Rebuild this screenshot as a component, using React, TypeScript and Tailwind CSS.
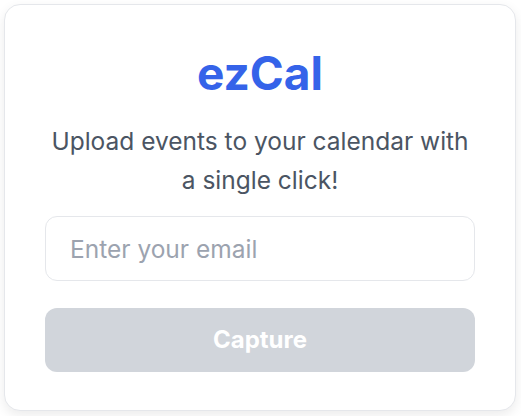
import React, { useState } from 'react';

export default function App() {
  const [email, setEmail] = useState('');

  return (
    <div className="min-h-screen bg-white pl-1 pt-1" style={{ fontFamily: 'Inter, "Liberation Sans", sans-serif' }}>
      <div className="w-[512px] rounded-2xl border border-[#e5e7eb] bg-white px-10 pt-[45px] pb-[38px] shadow-[0_4px_12px_rgba(0,0,0,0.08)]">
        <h1 className="text-center text-[46px] font-bold leading-none text-[#3563e9]">ezCal</h1>
        <p className="mt-[26px] text-center text-[24.5px] leading-[39px] text-[#4b5563]">
          Upload events to your calendar with a single click!
        </p>
        <input
          type="email"
          value={email}
          onChange={(e) => setEmail(e.target.value)}
          placeholder="Enter your email"
          className="mt-4 block h-[65px] w-full rounded-xl border border-[#e5e7eb] px-[24px] text-[24.5px] text-[#111827] outline-none placeholder:text-[#9ca3af]"
        />
        <button
          disabled={!email}
          className="mt-[27px] block h-[64px] w-full rounded-xl bg-[#d1d5db] text-[24px] font-bold text-white"
        >
          Capture
        </button>
      </div>
    </div>
  );
}
